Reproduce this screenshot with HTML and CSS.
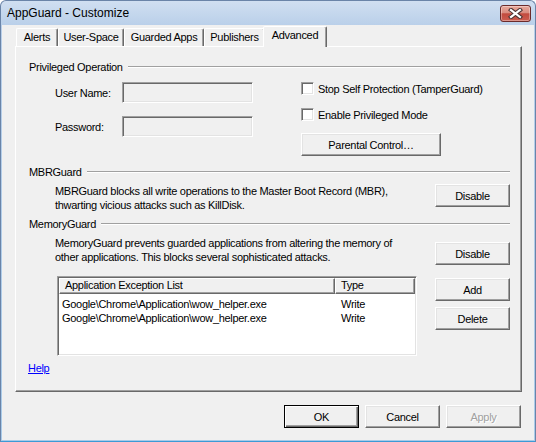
FILE: index.html
```html
<!DOCTYPE html>
<html>
<head>
<meta charset="utf-8">
<title>AppGuard - Customize</title>
<link rel="stylesheet" href="styles.css">
</head>
<body>
<div class="window">
  <div class="titlebar">
    <span class="title">AppGuard - Customize</span>
    <div class="close">
      <svg width="15" height="11" viewBox="0 0 15 11">
        <path d="M3 2 L12 9 M12 2 L3 9" stroke="#4a3434" stroke-width="4.2" stroke-linecap="square" fill="none"/>
        <path d="M3 2 L12 9 M12 2 L3 9" stroke="#ffffff" stroke-width="2.2" stroke-linecap="square" fill="none"/>
      </svg>
    </div>
  </div>
  <div class="client">
    <div class="tabs">
      <div class="tab tab-alerts">Alerts</div>
      <div class="tab tab-user">User-Space</div>
      <div class="tab tab-guarded">Guarded Apps</div>
      <div class="tab tab-publishers">Publishers</div>
      <div class="tab tab-advanced active">Advanced</div>
    </div>
    <div class="panel">
      <div class="group-head"><span>Privileged Operation</span><span class="rule"></span></div>
      <div class="priv">
        <div class="fields">
          <div class="field-row"><label>User Name:</label><div class="edit"></div></div>
          <div class="field-row"><label>Password:</label><div class="edit"></div></div>
        </div>
        <div class="options">
          <div class="check-row"><span class="checkbox"></span><span>Stop Self Protection (TamperGuard)</span></div>
          <div class="check-row second"><span class="checkbox"></span><span>Enable Privileged Mode</span></div>
          <button class="btn btn-parental">Parental Control…</button>
        </div>
      </div>

      <div class="group-head mbr-head"><span>MBRGuard</span><span class="rule"></span></div>
      <div class="desc-row mbr-row">
        <p class="desc">MBRGuard blocks all write operations to the Master Boot Record (MBR),<br>thwarting vicious attacks such as KillDisk.</p>
        <button class="btn">Disable</button>
      </div>

      <div class="group-head mem-head"><span>MemoryGuard</span><span class="rule"></span></div>
      <div class="desc-row mem-row">
        <p class="desc">MemoryGuard prevents guarded applications from altering the memory of<br>other applications. This blocks several sophisticated attacks.</p>
        <button class="btn">Disable</button>
      </div>

      <div class="list-row">
        <div class="list">
          <div class="list-header">
            <div class="hcell">Application Exception List</div>
            <div class="hcell">Type</div>
          </div>
          <div class="list-body">
            <div class="cell">Google\Chrome\Application\wow_helper.exe</div>
            <div class="cell type">Write</div>
            <div class="cell">Google\Chrome\Application\wow_helper.exe</div>
            <div class="cell type">Write</div>
          </div>
        </div>
        <div class="list-buttons">
          <button class="btn">Add</button>
          <button class="btn">Delete</button>
        </div>
      </div>

      <a class="help" href="#">Help</a>
    </div>
    <div class="footer">
      <button class="btn btn-default">OK</button>
      <button class="btn">Cancel</button>
      <button class="btn btn-disabled">Apply</button>
    </div>
  </div>
</div>
</body>
</html>
```

FILE: styles.css
```css
* {
  box-sizing: border-box;
  margin: 0;
  padding: 0;
}

html, body {
  width: 536px;
  height: 442px;
  overflow: hidden;
  background: #ffffff;
}

body {
  font-family: "Liberation Sans", Arial, sans-serif;
  font-size: 11px;
  letter-spacing: -0.3px;
  color: #000;
}

.window {
  width: 536px;
  height: 442px;
  border: 1px solid #6a84a8;
  border-bottom-color: #3d9ad6;
  border-radius: 6px 6px 0 0;
  background: linear-gradient(#d0dff1, #b9cfe9 25px, #a9cbe9);
  display: flex;
  flex-direction: column;
  overflow: hidden;
}

.titlebar {
  height: 24px;
  flex: none;
  display: flex;
  align-items: center;
  padding: 0 4px 0 6px;
}

.title {
  flex: 1;
  font-size: 12px;
  letter-spacing: 0;
  color: #000;
}

.close {
  width: 31px;
  height: 17px;
  border: 1px solid #6b2b2b;
  border-radius: 3px;
  background: linear-gradient(#e9a99c, #d98c7f 45%, #c24b3e 52%, #cc5d50);
  box-shadow: inset 0 0 0 1px rgba(255, 255, 255, 0.35);
  display: flex;
  align-items: center;
  justify-content: center;
}

.client {
  flex: 1;
  margin: 0 1px 1px;
  background: #f0f0f0;
  display: flex;
  flex-direction: column;
  padding: 0 12px 0 13px;
}

/* Tabs */
.tabs {
  height: 21px;
  display: flex;
  align-items: flex-end;
  padding-left: 1px;
  flex: none;
}

.tab {
  height: 18px;
  line-height: 17px;
  text-align: center;
  border: 1px solid;
  border-bottom: none;
  border-color: #fff #696969 transparent #fff;
  box-shadow: inset -1px 0 #a0a0a0;
  border-radius: 2px 2px 0 0;
  white-space: nowrap;
}

.tab-alerts { width: 42px; }
.tab-user { width: 66px; }
.tab-guarded { width: 80px; }
.tab-publishers { width: 61px; }
.tab-advanced { width: 60px; }

.tab.active {
  width: 64px;
  height: 21px;
  margin: 0 -2px -1px;
  padding-bottom: 2px;
  background: #f0f0f0;
  position: relative;
  z-index: 1;
}

/* Panel */
.panel {
  height: 346px;
  flex: none;
  border: 1px solid;
  border-color: #fff #696969 #696969 #fff;
  box-shadow: inset -1px -1px #a0a0a0;
  padding: 13px 11px 0 13px;
  display: flex;
  flex-direction: column;
}

.group-head {
  display: flex;
  align-items: center;
  height: 14px;
  gap: 5px;
  white-space: nowrap;
}

.rule {
  flex: 1;
  height: 2px;
  border-top: 1px solid #a0a0a0;
  border-bottom: 1px solid #fff;
}

.priv {
  display: flex;
  margin-top: 8px;
  padding-left: 26px;
}

.fields {
  width: 246px;
  display: flex;
  flex-direction: column;
  gap: 13px;
}

.field-row {
  display: flex;
  align-items: center;
  height: 21px;
}

.field-row label {
  width: 67px;
}

.edit {
  width: 131px;
  height: 21px;
  background: #f0f0f0;
  border: 1px solid;
  border-color: #a0a0a0 #fff #fff #a0a0a0;
  box-shadow: inset 1px 1px #696969, inset -1px -1px #e3e3e3;
}

.options {
  display: flex;
  flex-direction: column;
  align-items: flex-start;
}

.check-row {
  display: flex;
  align-items: center;
  height: 13px;
  gap: 4px;
  white-space: nowrap;
}

.check-row.second {
  margin-top: 13px;
}

.checkbox {
  width: 13px;
  height: 13px;
  flex: none;
  background: #fff;
  border: 1px solid;
  border-color: #a0a0a0 #fff #fff #a0a0a0;
  box-shadow: inset 1px 1px #696969, inset -1px -1px #e3e3e3;
}

.btn {
  font: inherit;
  letter-spacing: inherit;
  color: #000;
  background: #f0f0f0;
  border: 1px solid;
  border-color: #fff #696969 #696969 #fff;
  box-shadow: inset -1px -1px #a0a0a0, inset 1px 1px #e3e3e3;
  width: 75px;
  height: 23px;
  flex: none;
  display: flex;
  align-items: center;
  justify-content: center;
}

.btn-parental {
  width: 140px;
  margin-top: 12px;
}

.mbr-head {
  margin-top: 9px;
}

.mem-head {
  margin-top: 5px;
}

.desc-row {
  display: flex;
  align-items: flex-start;
  padding-left: 26px;
  margin-top: 5px;
}

.desc {
  flex: 1;
  line-height: 14px;
  white-space: nowrap;
}

.mem-row .btn {
  margin-top: 6px;
}

.list-row {
  display: flex;
  margin-top: 11px;
  padding-left: 28px;
}

.list {
  width: 360px;
  height: 80px;
  background: #fff;
  border: 1px solid;
  border-color: #a0a0a0 #fff #fff #a0a0a0;
  box-shadow: inset 1px 1px #696969, inset -1px -1px #e3e3e3;
  padding: 1px;
}

.list-header {
  display: grid;
  grid-template-columns: 276px 1fr;
  height: 16px;
}

.hcell {
  background: #f0f0f0;
  border: 1px solid;
  border-color: #fff #696969 #696969 #fff;
  box-shadow: inset -1px -1px #a0a0a0;
  padding-left: 5px;
  line-height: 13px;
  white-space: nowrap;
}

.list-body {
  display: grid;
  grid-template-columns: 276px 1fr;
  grid-auto-rows: 14px;
  margin-top: 3px;
  line-height: 14px;
}

.cell {
  padding-left: 3px;
  white-space: nowrap;
}

.cell.type {
  padding-left: 6px;
}

.list-buttons {
  margin-left: auto;
  margin-top: 2px;
  display: flex;
  flex-direction: column;
  gap: 6px;
}

.help {
  align-self: flex-start;
  margin-top: 5px;
  margin-left: -1px;
  line-height: 14px;
  color: #0000ff;
  text-decoration: underline;
}

.footer {
  display: flex;
  justify-content: flex-end;
  gap: 6px;
  margin-top: 13px;
  padding-right: 1px;
}

.btn-default {
  border: 1px solid #000;
  box-shadow: inset 1px 1px #fff, inset -1px -1px #696969, inset -2px -2px #a0a0a0;
}

.btn-disabled {
  color: #a0a0a0;
  text-shadow: 1px 1px #fff;
}
```
